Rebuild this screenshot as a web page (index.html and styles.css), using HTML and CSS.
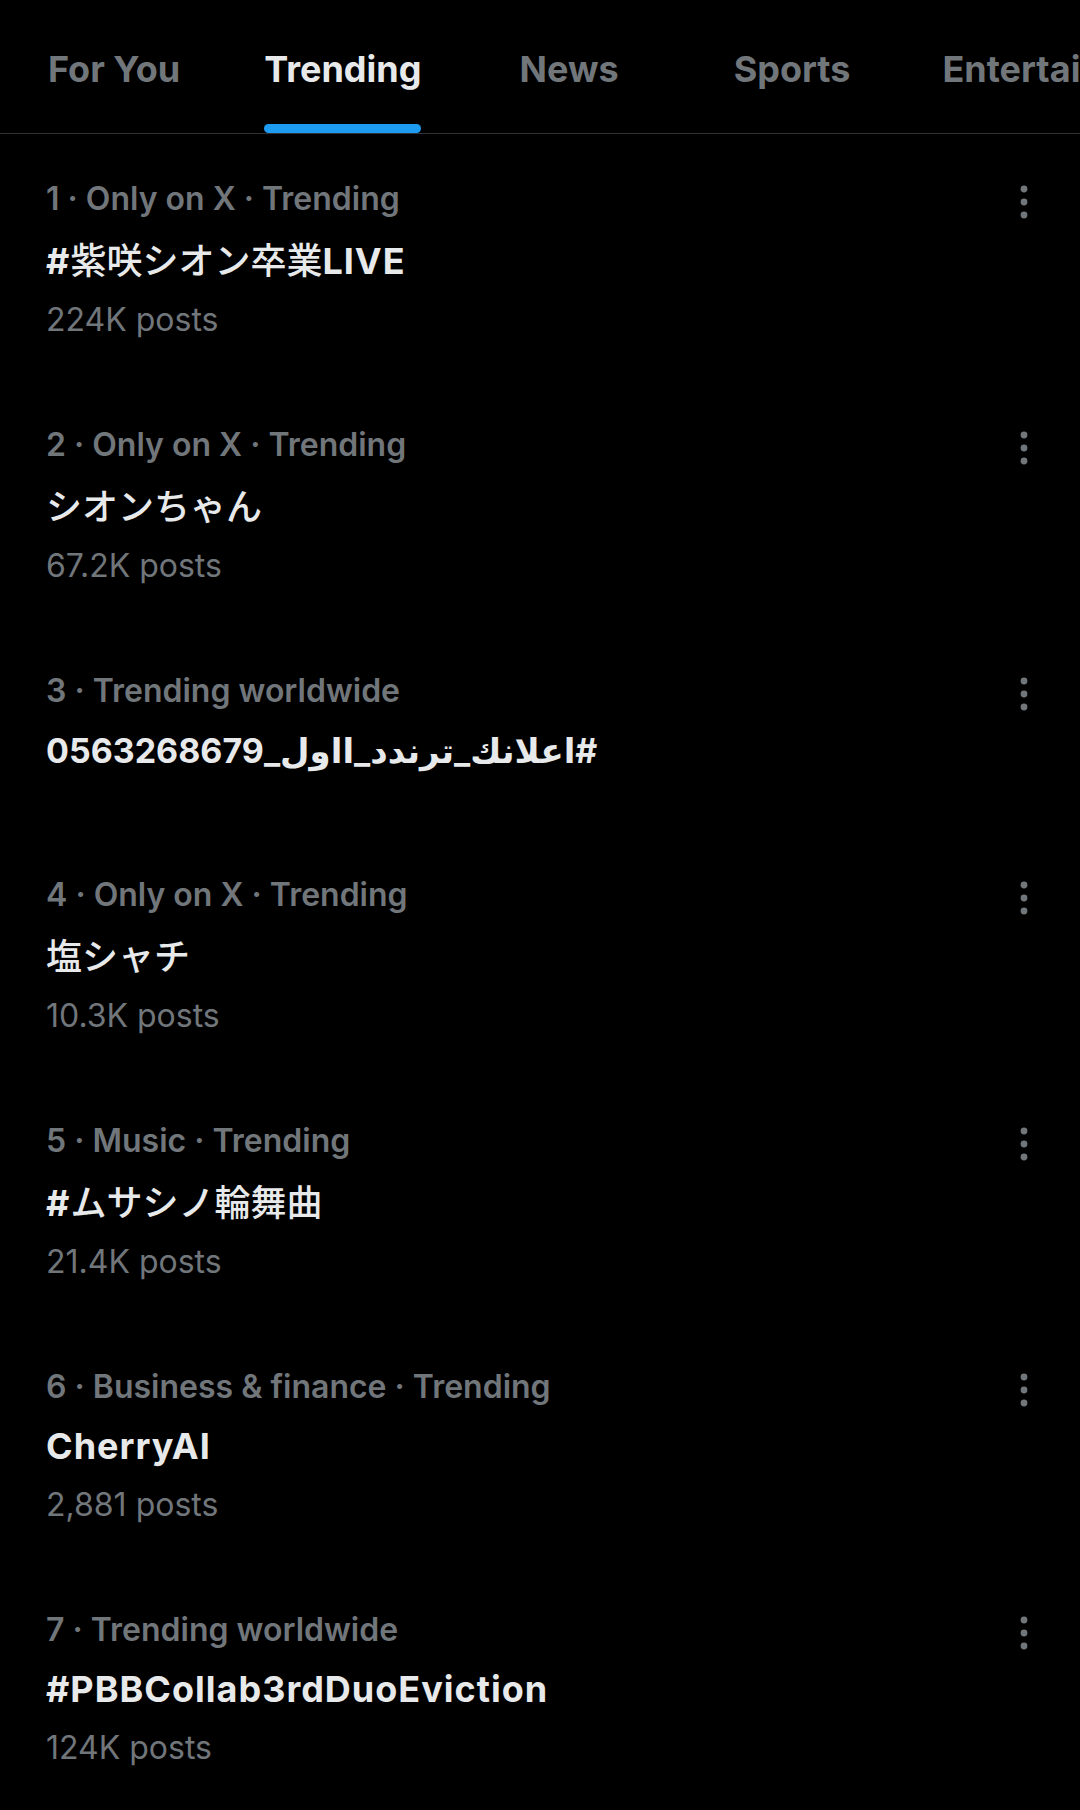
FILE: index.html
```html
<!doctype html>
<html>
  <head>
    <meta charset="utf-8">
    <meta name="viewport" content="width=device-width, initial-scale=1">
    <title>Explore - Trending</title>
    <link rel="stylesheet" href="styles.css">
  </head>
  <body>
    <nav class="tabs">
      <a href="#" class="tab">For You</a>
      <a href="#" class="tab active">Trending</a>
      <a href="#" class="tab tab-wide">News</a>
      <a href="#" class="tab">Sports</a>
      <a href="#" class="tab">Entertainment</a>
    </nav>
    <ul class="trends">
      <li class="trend">
        <div class="trend-body">
          <div class="meta">1 · Only on X · Trending</div>
          <div class="title">#<span class="ja">紫咲シオン卒業</span>LIVE</div>
          <div class="count">224K posts</div>
        </div>
        <svg class="more" viewBox="0 0 24 40" width="24" height="40"><circle cx="12" cy="7" r="3.4"/><circle cx="12" cy="20" r="3.4"/><circle cx="12" cy="33" r="3.4"/></svg>
      </li>
      <li class="trend">
        <div class="trend-body">
          <div class="meta">2 · Only on X · Trending</div>
          <div class="title"><span class="ja">シオンちゃん</span></div>
          <div class="count">67.2K posts</div>
        </div>
        <svg class="more" viewBox="0 0 24 40" width="24" height="40"><circle cx="12" cy="7" r="3.4"/><circle cx="12" cy="20" r="3.4"/><circle cx="12" cy="33" r="3.4"/></svg>
      </li>
      <li class="trend no-count">
        <div class="trend-body">
          <div class="meta">3 · Trending worldwide</div>
          <div class="title title-rtl" dir="rtl"><span class="ar">#اعلانك_ترندد_ااول_0563268679</span></div>
        </div>
        <svg class="more" viewBox="0 0 24 40" width="24" height="40"><circle cx="12" cy="7" r="3.4"/><circle cx="12" cy="20" r="3.4"/><circle cx="12" cy="33" r="3.4"/></svg>
      </li>
      <li class="trend">
        <div class="trend-body">
          <div class="meta">4 · Only on X · Trending</div>
          <div class="title"><span class="ja">塩シャチ</span></div>
          <div class="count">10.3K posts</div>
        </div>
        <svg class="more" viewBox="0 0 24 40" width="24" height="40"><circle cx="12" cy="7" r="3.4"/><circle cx="12" cy="20" r="3.4"/><circle cx="12" cy="33" r="3.4"/></svg>
      </li>
      <li class="trend">
        <div class="trend-body">
          <div class="meta">5 · Music · Trending</div>
          <div class="title">#<span class="ja">ムサシノ輪舞曲</span></div>
          <div class="count">21.4K posts</div>
        </div>
        <svg class="more" viewBox="0 0 24 40" width="24" height="40"><circle cx="12" cy="7" r="3.4"/><circle cx="12" cy="20" r="3.4"/><circle cx="12" cy="33" r="3.4"/></svg>
      </li>
      <li class="trend">
        <div class="trend-body">
          <div class="meta">6 · Business &amp; finance · Trending</div>
          <div class="title">CherryAI</div>
          <div class="count">2,881 posts</div>
        </div>
        <svg class="more" viewBox="0 0 24 40" width="24" height="40"><circle cx="12" cy="7" r="3.4"/><circle cx="12" cy="20" r="3.4"/><circle cx="12" cy="33" r="3.4"/></svg>
      </li>
      <li class="trend">
        <div class="trend-body">
          <div class="meta">7 · Trending worldwide</div>
          <div class="title">#PBBCollab3rdDuoEviction</div>
          <div class="count">124K posts</div>
        </div>
        <svg class="more" viewBox="0 0 24 40" width="24" height="40"><circle cx="12" cy="7" r="3.4"/><circle cx="12" cy="20" r="3.4"/><circle cx="12" cy="33" r="3.4"/></svg>
      </li>
    </ul>
  </body>
</html>
```
FILE: styles.css
```css
body {
    margin: 0;
    background: #000;
    color: #e7e9ea;
    font-family: Inter, "Noto Sans CJK JP", sans-serif;
    font-variant-ligatures: none;
    overflow-x: hidden;
}
.tabs {
    display: flex;
    height: 133px;
    padding-left: 6px;
    border-bottom: 1px solid #2f3336;
    overflow: hidden;
    white-space: nowrap;
}
.tab {
    display: flex;
    flex-direction: column;
    align-items: center;
    flex-shrink: 0;
    padding: 46px 42px 0;
    color: #71767b;
    text-decoration: none;
    font-size: 36px;
    font-weight: 700;
    line-height: 46px;
}
.tab-wide {
    padding-left: 56px;
    padding-right: 73px;
}
.tab:last-child {
    padding-left: 50px;
}
.tab.active {
    color: #e7e9ea;
}
.tab.active::after {
    content: "";
    display: block;
    width: 100%;
    height: 9px;
    margin-top: auto;
    border-radius: 5px;
    background: #1d9bf0;
}
.trends {
    list-style: none;
    margin: 0;
    padding: 0;
}
.trend {
    display: flex;
    align-items: flex-start;
    padding: 45px 44px 38px 46px;
}
.trend.no-count {
    padding-bottom: 55px;
}
.trend-body {
    flex: 1;
}
.meta {
    color: #71767b;
    font-size: 32px;
    font-weight: 600;
    line-height: 40px;
}
.title {
    margin-top: 15px;
    font-size: 36px;
    font-weight: 700;
    letter-spacing: 1px;
    line-height: 48px;
}
.title .ja {
    font-family: "Noto Sans CJK JP", sans-serif;
    font-weight: 500;
    letter-spacing: 0;
}
.title-rtl {
    text-align: left;
}
.title .ar {
    font-family: Inter, "DejaVu Sans", sans-serif;
    font-size: 34px;
    font-weight: 700;
    letter-spacing: 0;
}
.count {
    margin-top: 13px;
    color: #71767b;
    font-size: 32px;
    font-weight: 400;
    line-height: 44px;
}
.more {
    flex-shrink: 0;
    margin-top: 3px;
    fill: #71767b;
}
```
